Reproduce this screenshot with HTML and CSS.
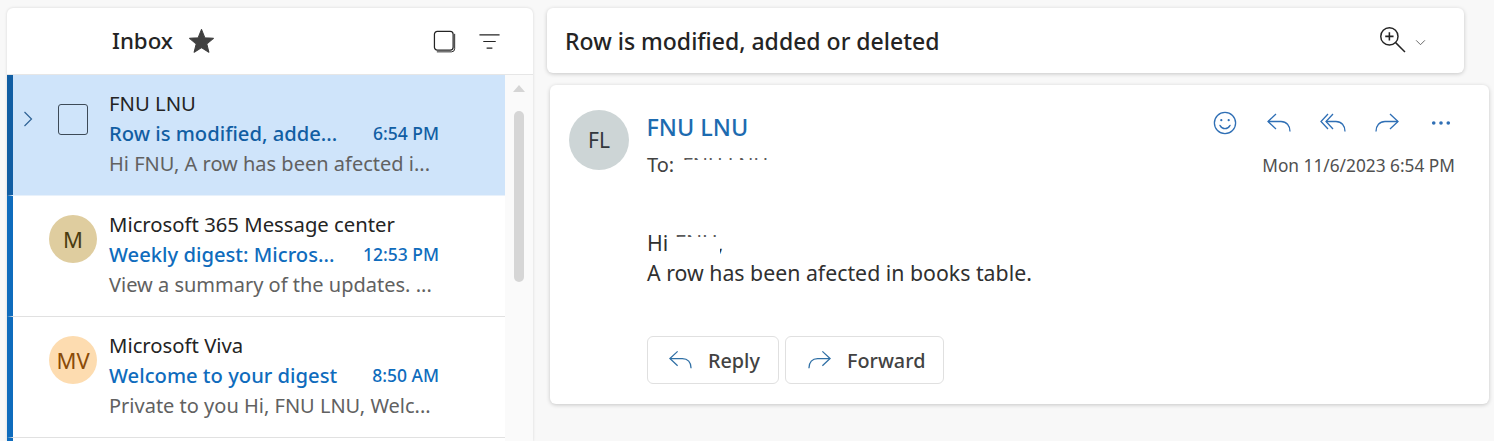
FILE: index.html
```html
<!DOCTYPE html>
<html lang="en">
<head>
<meta charset="utf-8">
<title>Inbox</title>
<link rel="stylesheet" href="styles.css">
</head>
<body>
<div class="app">
  <section class="list-panel">
    <header class="list-head">
      <h1 class="inbox-title">Inbox</h1>
      <svg class="star" viewBox="0 0 26 26"><path d="M13 1.5l3.2 7.8 8.3.6-6.4 5.3 2 8.1-7.1-4.4-7.1 4.4 2-8.1-6.4-5.3 8.3-.6z" fill="#404040" stroke="#404040" stroke-linejoin="round"/></svg>
      <span class="head-spacer"></span>
      <svg class="head-icon" viewBox="0 0 24 24" fill="none" stroke="#242424" stroke-width="1.3"><rect x="1.5" y="1.5" width="19.5" height="19.5" rx="3"/><path d="M22.6 4v15.5a3.3 3.3 0 0 1-3.3 3.3H4" stroke-width="1"/></svg>
      <svg class="head-icon filter" viewBox="0 0 24 24" fill="none" stroke="#242424" stroke-width="1.3"><path d="M1.5 5h21M5.5 12h13M9 19h6"/></svg>
    </header>
    <div class="list-body">
      <ul class="rows">
        <li class="row selected">
          <svg class="chevron" viewBox="0 0 10 18" fill="none" stroke="#2f6295" stroke-width="1.2"><path d="M1.5 2l7 7-7 7"/></svg>
          <span class="check"></span>
          <div class="row-text">
            <div class="sender">FNU LNU</div>
            <div class="subject-line"><span class="subject">Row is modified, adde...</span><span class="time">6:54 PM</span></div>
            <div class="preview">Hi FNU, A row has been afected i...</div>
          </div>
        </li>
        <li class="row">
          <span class="avatar tan">M</span>
          <div class="row-text">
            <div class="sender">Microsoft 365 Message center</div>
            <div class="subject-line"><span class="subject">Weekly digest: Micros...</span><span class="time">12:53 PM</span></div>
            <div class="preview">View a summary of the updates. ...</div>
          </div>
        </li>
        <li class="row">
          <span class="avatar peach">MV</span>
          <div class="row-text">
            <div class="sender">Microsoft Viva</div>
            <div class="subject-line"><span class="subject">Welcome to your digest</span><span class="time">8:50 AM</span></div>
            <div class="preview">Private to you Hi, FNU LNU, Welc...</div>
          </div>
        </li>
        <li class="row"></li>
      </ul>
      <div class="scrollbar">
        <span class="scroll-up"></span>
        <span class="scroll-thumb"></span>
      </div>
    </div>
  </section>

  <main class="reading">
    <header class="subject-card">
      <h2 class="subject-title">Row is modified, added or deleted</h2>
      <svg class="zoom-icon" viewBox="0 0 26 26" fill="none" stroke="#242424" stroke-width="1.4"><circle cx="10" cy="10" r="8.3"/><path d="M6 10h8M10 6v8" stroke-width="1.5"/><path d="M16 16l9 9"/></svg>
      <svg class="zoom-caret" viewBox="0 0 12 8" fill="none" stroke="#555" stroke-width="1"><path d="M1 1.5l5 5 5-5"/></svg>
    </header>
    <article class="message-card">
      <div class="msg-head">
        <span class="avatar grey">FL</span>
        <div class="msg-people">
          <div class="msg-from">FNU LNU</div>
          <div class="msg-to">To: <span class="redacted">FNU LNU</span></div>
        </div>
        <div class="msg-side">
          <div class="msg-actions">
            <svg class="act" viewBox="0 0 26 26" fill="none" stroke="#2f6fb5" stroke-width="1.4"><circle cx="13" cy="13" r="11.5"/><path d="M7.5 15.5c1.5 2.6 3.4 3.7 5.5 3.7s4-1.1 5.5-3.7" stroke-linecap="round"/><circle cx="9" cy="10" r="1.2" fill="#2f6fb5" stroke="none"/><circle cx="17" cy="10" r="1.2" fill="#2f6fb5" stroke="none"/></svg>
            <svg class="act" viewBox="0 0 26 22" fill="none" stroke="#2f6fb5" stroke-width="1.3"><path d="M10 2L2 9.5l8 7.5"/><path d="M2 9.5h13c5.5 0 9 4 9 10"/></svg>
            <svg class="act" viewBox="0 0 26 22" fill="none" stroke="#2f6fb5" stroke-width="1.3"><path d="M8 2L1 9.5l7 7.5"/><path d="M13 2L6 9.5l7 7.5"/><path d="M6 9.5h10c5.5 0 9 4 9 10"/></svg>
            <svg class="act" viewBox="0 0 26 22" fill="none" stroke="#2f6fb5" stroke-width="1.3"><path d="M16 2l8 7.5-8 7.5"/><path d="M24 9.5H11c-5.5 0-9 4-9 10"/></svg>
            <svg class="act more" viewBox="0 0 22 6" fill="#2f6fb5"><circle cx="3" cy="3" r="2"/><circle cx="11" cy="3" r="2"/><circle cx="19" cy="3" r="2"/></svg>
          </div>
          <div class="msg-date">Mon 11/6/2023 6:54 PM</div>
        </div>
      </div>
      <div class="msg-body">
        <div>Hi <span class="redacted short">FNU</span>,</div>
        <div>A row has been afected in books table.</div>
      </div>
      <div class="msg-buttons">
        <button class="btn reply-btn" type="button">
          <svg viewBox="0 0 26 22" fill="none" stroke="#2f6fa5" stroke-width="1.3"><path d="M10 2L2 9.5l8 7.5"/><path d="M2 9.5h13c5.5 0 9 4 9 10"/></svg>
          Reply
        </button>
        <button class="btn forward-btn" type="button">
          <svg viewBox="0 0 26 22" fill="none" stroke="#2f6fa5" stroke-width="1.3"><path d="M16 2l8 7.5-8 7.5"/><path d="M24 9.5H11c-5.5 0-9 4-9 10"/></svg>
          Forward
        </button>
      </div>
    </article>
  </main>
</div>
</body>
</html>
```

FILE: styles.css
```css
* { box-sizing: border-box; }
html, body { margin: 0; height: 100%; }
body {
  background: #f8f8f8;
  font-family: "Noto Sans", "Open Sans", sans-serif;
  color: #242424;
  overflow: hidden;
}
.app { display: flex; padding: 8px 5px 0 7px; height: 441px; }

.list-panel {
  width: 526px;
  height: 433px;
  background: #fff;
  border-radius: 6px 6px 0 0;
  box-shadow: 0 0 3px rgba(0,0,0,.14);
  overflow: hidden;
  display: flex;
  flex-direction: column;
}
.list-head {
  height: 67px;
  flex: none;
  display: flex;
  align-items: center;
  padding: 0 32px 0 105px;
  border-bottom: 1px solid #e6e6e6;
}
.inbox-title { margin: 0; font-size: 22.3px; font-weight: 500; line-height: 30px; color: #242424; }
.star { width: 27px; height: 27px; margin-left: 15px; }
.head-spacer { flex: 1; }
.head-icon { width: 23px; height: 23px; }
.head-icon.filter { margin-left: 22px; }

.list-body { flex: 1; display: flex; min-height: 0; }
.rows { list-style: none; margin: 0; padding: 0; width: 498px; flex: none; }
.row {
  height: 121px;
  display: flex;
  align-items: flex-start;
  position: relative;
  border-left: 6px solid #0f6cbd;
  border-bottom: 1px solid #e1e1e1;
  padding: 13px 0 0 0;
}
.row.selected { background: #cfe4fa; border-left-color: #115ea3; border-bottom-color: #e8f1fb; }
.chevron { width: 10px; height: 18px; position: absolute; left: 10px; top: 35px; }
.check {
  width: 30px; height: 31px;
  border: 1px solid #3d4a57;
  border-radius: 3px;
  position: absolute; left: 45px; top: 29px;
}
.avatar {
  flex: none;
  width: 48px; height: 48px;
  border-radius: 50%;
  display: flex; align-items: center; justify-content: center;
  font-size: 22px;
}
.row > .avatar { position: absolute; left: 36px; top: 19px; }
.tan { background: #dfcd9f; color: #4a3c10; }
.peach { background: #fddcb0; color: #8a4b08; }
.grey { background: #cdd5d6; color: #33383d; width: 60px; height: 60px; font-size: 21px; }
.row-text { margin-left: 96px; width: 330px; }
.sender { font-size: 20.3px; line-height: 30px; color: #242424; white-space: nowrap; }
.subject-line { display: flex; justify-content: space-between; align-items: center; line-height: 30px; }
.subject { font-size: 20.2px; font-weight: 500; color: #0f6cbd; white-space: nowrap; }
.time { font-size: 17.5px; font-weight: 500; color: #0f6cbd; white-space: nowrap; }
.selected .subject, .selected .time { color: #115ea3; }
.preview { font-size: 20px; line-height: 30px; color: #616161; white-space: nowrap; margin-top: 1px; }

.scrollbar { flex: 1; position: relative; background: #fafafa; }
.scroll-up {
  position: absolute; left: 8px; top: 10px;
  border: 6px solid transparent; border-top: 0; border-bottom: 7px solid #d5d5d5;
}
.scroll-thumb {
  position: absolute; left: 9px; top: 36px;
  width: 10px; height: 171px;
  border-radius: 5px; background: #d6d6d6;
}

.reading { margin-left: 14px; width: 942px; flex: none; }
.subject-card {
  width: 917px; height: 65px;
  background: #fff;
  border-radius: 6px;
  box-shadow: 0 1px 4px rgba(0,0,0,.2);
  display: flex; align-items: center;
  padding: 0 38px 0 18px;
}
.subject-title { margin: 0; flex: 1; font-size: 23px; font-weight: 500; color: #242424; line-height: 30px; }
.zoom-icon { width: 27px; height: 27px; margin-top: -3px; }
.zoom-caret { width: 11px; height: 7px; margin-left: 9px; margin-top: 4px; }

.message-card {
  margin: 12px 0 0 3px;
  width: 939px; height: 319px;
  background: #fff;
  border-radius: 6px;
  box-shadow: 0 1px 4px rgba(0,0,0,.2);
  padding: 25px 34px 0 19px;
}
.msg-head { display: flex; }
.msg-people { margin-left: 18px; flex: 1; }
.msg-from { font-size: 23.4px; line-height: 34px; color: #1d6bb0; font-weight: 500; margin-left: -0.5px; }
.msg-to { font-size: 20px; line-height: 28px; color: #424242; margin-top: 7px; }
.redacted { position: relative; display: inline-block; margin-left: 3px; color: #5a5a5a; }
.redacted::after {
  content: "";
  position: absolute; left: -2px; right: -2px; top: 9px; bottom: -2px;
  background: #fff;
}
.redacted.short { margin: 0 0 0 1px; }
.msg-side { display: flex; flex-direction: column; align-items: flex-end; }
.msg-actions { display: flex; align-items: center; gap: 28px; height: 26px; margin-right: 4px; }
.act { width: 26px; height: 24px; display: block; }
.act.more { width: 20px; height: 6px; margin-left: 3px; }
.msg-date { font-size: 17.3px; line-height: 24px; color: #505050; margin-top: 18px; }
.msg-body { margin: 49px 0 0 78px; font-size: 21.3px; line-height: 29.5px; color: #303030; }
.msg-buttons { display: flex; gap: 6px; margin: 49px 0 0 78px; }
.btn {
  height: 48px;
  background: #fff;
  border: 1px solid #e0e0e0;
  border-radius: 6px;
  display: flex; align-items: center;
  font: 500 19.8px "Noto Sans", "Open Sans", sans-serif;
  color: #424242;
  padding: 0;
}
.btn svg { width: 25px; height: 22px; margin-right: 15px; }
.reply-btn { width: 132px; padding-left: 20px; }
.forward-btn { width: 159px; padding-left: 21px; }
```
